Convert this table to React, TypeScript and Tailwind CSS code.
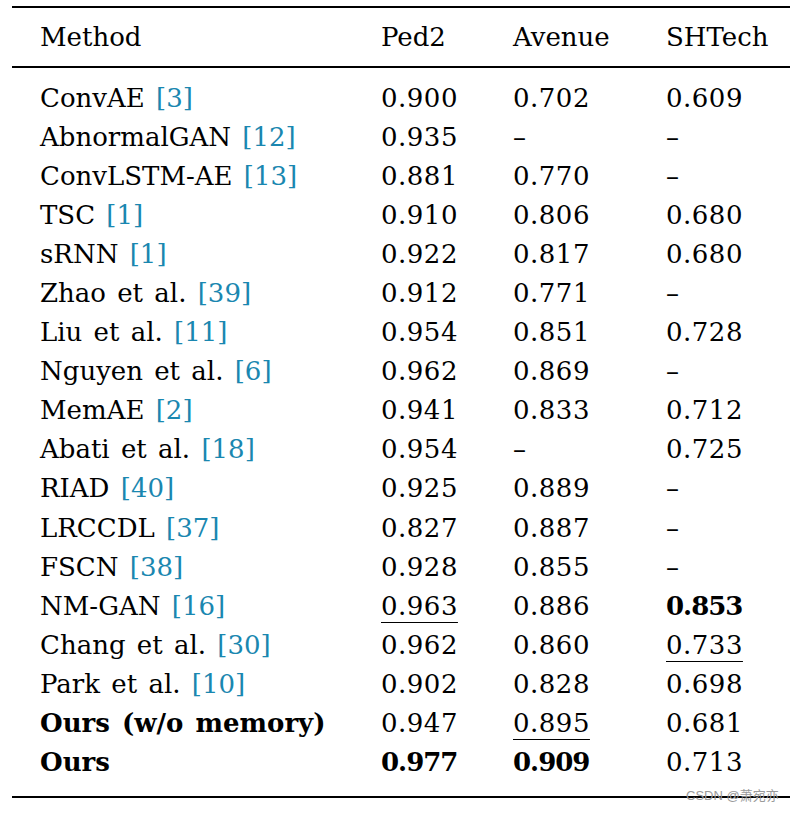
import React from "react";

type Cell = { v: string; b?: boolean; u?: boolean };
type Row = { name: string; ref?: string; bold?: boolean; cells: Cell[] };

const rows: Row[] = [
  { name: "ConvAE", ref: "3", cells: [{ v: "0.900" }, { v: "0.702" }, { v: "0.609" }] },
  { name: "AbnormalGAN", ref: "12", cells: [{ v: "0.935" }, { v: "–" }, { v: "–" }] },
  { name: "ConvLSTM-AE", ref: "13", cells: [{ v: "0.881" }, { v: "0.770" }, { v: "–" }] },
  { name: "TSC", ref: "1", cells: [{ v: "0.910" }, { v: "0.806" }, { v: "0.680" }] },
  { name: "sRNN", ref: "1", cells: [{ v: "0.922" }, { v: "0.817" }, { v: "0.680" }] },
  { name: "Zhao et al.", ref: "39", cells: [{ v: "0.912" }, { v: "0.771" }, { v: "–" }] },
  { name: "Liu et al.", ref: "11", cells: [{ v: "0.954" }, { v: "0.851" }, { v: "0.728" }] },
  { name: "Nguyen et al.", ref: "6", cells: [{ v: "0.962" }, { v: "0.869" }, { v: "–" }] },
  { name: "MemAE", ref: "2", cells: [{ v: "0.941" }, { v: "0.833" }, { v: "0.712" }] },
  { name: "Abati et al.", ref: "18", cells: [{ v: "0.954" }, { v: "–" }, { v: "0.725" }] },
  { name: "RIAD", ref: "40", cells: [{ v: "0.925" }, { v: "0.889" }, { v: "–" }] },
  { name: "LRCCDL", ref: "37", cells: [{ v: "0.827" }, { v: "0.887" }, { v: "–" }] },
  { name: "FSCN", ref: "38", cells: [{ v: "0.928" }, { v: "0.855" }, { v: "–" }] },
  { name: "NM-GAN", ref: "16", cells: [{ v: "0.963", u: true }, { v: "0.886" }, { v: "0.853", b: true }] },
  { name: "Chang et al.", ref: "30", cells: [{ v: "0.962" }, { v: "0.860" }, { v: "0.733", u: true }] },
  { name: "Park et al.", ref: "10", cells: [{ v: "0.902" }, { v: "0.828" }, { v: "0.698" }] },
  { name: "Ours (w/o memory)", bold: true, cells: [{ v: "0.947" }, { v: "0.895", u: true }, { v: "0.681" }] },
  { name: "Ours", bold: true, cells: [{ v: "0.977", b: true }, { v: "0.909", b: true }, { v: "0.713" }] },
];

const grid = "grid grid-cols-[341px_132px_153px_1fr] pl-[28px]";

export default function App() {
  return (
    <div
      className="relative w-[802px] h-[814px] bg-white text-black text-[26px] leading-none [word-spacing:3px]"
      style={{ fontFamily: '"DejaVu Serif", serif' }}
    >
      <div className="absolute inset-0 pt-[6px] px-[12px]">
        <div className="border-t-2 border-black" />
        <div className={`${grid} h-[60px] items-center border-b-2 border-black`}>
          <div>Method</div>
          <div>Ped2</div>
          <div>Avenue</div>
          <div>SHTech</div>
        </div>
        <div className="pt-[10px] pb-[14px] border-b-2 border-black">
          {rows.map((r, i) => (
            <div key={i} className={`${grid} h-[39.1px] items-center`}>
              <div className={r.bold ? "font-bold" : ""}>
                {r.name}
                {r.ref && <span className="text-[#1a87b0]"> [{r.ref}]</span>}
              </div>
              {r.cells.map((c, j) => (
                <div key={j}>
                  <span
                    className={`${c.b ? "font-bold tracking-[-1px]" : "tracking-[0.5px]"} ${c.u ? "underline decoration-1 underline-offset-[7px]" : ""}`}
                  >
                    {c.v}
                  </span>
                </div>
              ))}
            </div>
          ))}
        </div>
      </div>
      <div
        className="absolute left-[686px] top-[789px] text-[13px] text-[#9a9a9a] leading-none [word-spacing:0px]"
        style={{ fontFamily: '"Liberation Sans", "Noto Sans CJK SC", sans-serif' }}
      >
        CSDN @萧宛亦
      </div>
    </div>
  );
}
